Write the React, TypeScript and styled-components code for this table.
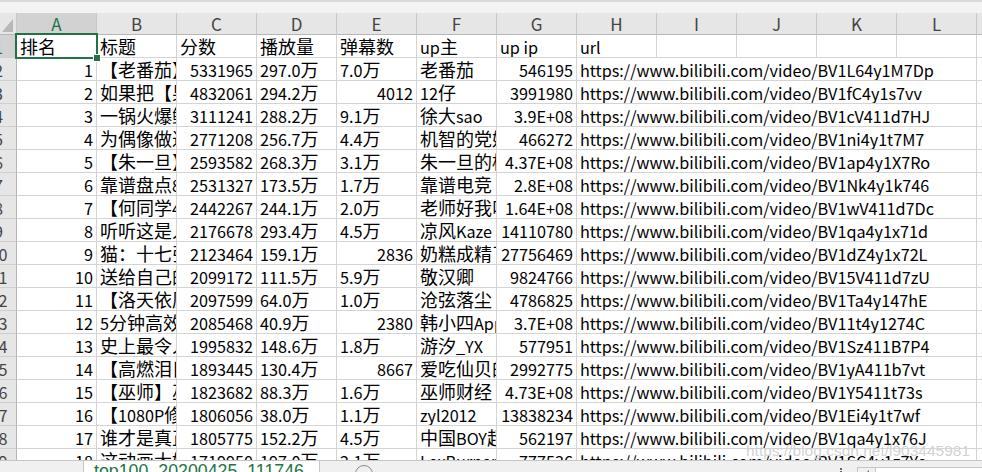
import React from "react";
import styled, { createGlobalStyle, css } from "styled-components";

const GREEN = "#217346";
const GRID = "#d4d4d4";
const HEAD_BG = "#e6e6e6";
const HEAD_SEL = "#d2d2d2";
const FONT = `"Noto Sans CJK SC", "Noto Sans", sans-serif`;
const COL_W = 80;

const Global = createGlobalStyle`
  html, body { margin: 0; padding: 0; background: #fff; overflow: hidden; }
  body { font-family: ${FONT}; }
`;

const Window = styled.div`
  position: relative;
  width: 982px;
  height: 472px;
  display: flex;
  flex-direction: column;
  overflow: hidden;
  background: #fff;
`;

const TopStrip = styled.div`
  flex: none;
  height: 13px;
  box-sizing: border-box;
  background: #f3f3f3;
  border-top: 2px solid #d9d9d9;
`;

const GridArea = styled.div`
  flex: 1;
  min-height: 0;
  overflow: hidden;
`;

const Sheet = styled.div`
  display: flex;
  flex-direction: column;
  width: max-content;
  margin-left: -19px;
`;

const Row = styled.div<{ $h: number }>`
  display: flex;
  flex: none;
  height: ${(p) => p.$h}px;
`;

const Corner = styled.div`
  flex: none;
  width: 36px;
  box-sizing: border-box;
  background: ${HEAD_BG};
  border-right: 1px solid #c8c8c8;
  border-bottom: 1px solid #b6b6b6;
  display: flex;
  justify-content: flex-end;
  align-items: flex-end;
  padding: 0 3px 2px 0;
`;

const CornerTriangle = styled.div`
  width: 0;
  height: 0;
  border-left: 11px solid transparent;
  border-bottom: 13px solid #b8b8b8;
`;

const ColHeader = styled.div<{ $sel?: boolean }>`
  flex: none;
  width: ${COL_W}px;
  box-sizing: border-box;
  background: ${(p) => (p.$sel ? HEAD_SEL : HEAD_BG)};
  color: ${(p) => (p.$sel ? GREEN : "#444")};
  border-right: 1px solid #c8c8c8;
  border-bottom: 1px solid #b6b6b6;
  font-size: 17px;
  line-height: 21px;
  text-align: center;
`;

const RowHeader = styled.div<{ $sel?: boolean }>`
  flex: none;
  width: 36px;
  box-sizing: border-box;
  background: ${(p) => (p.$sel ? HEAD_SEL : HEAD_BG)};
  color: ${(p) => (p.$sel ? GREEN : "#444")};
  border-right: 1px solid #b6b6b6;
  border-bottom: 1px solid #cfcfcf;
  font-size: 16.2px;
  line-height: 22px;
  padding-top: 1px;
  text-align: center;
  overflow: hidden;
`;

const Cell = styled.div<{ $span?: number; $align?: "left" | "right"; $sel?: boolean }>`
  flex: none;
  width: ${(p) => (p.$span ?? 1) * COL_W}px;
  box-sizing: border-box;
  border-right: 1px solid ${GRID};
  border-bottom: 1px solid ${GRID};
  padding: 1px 3px 0;
  font-size: 16.2px;
  line-height: 22px;
  color: #000;
  white-space: nowrap;
  overflow: hidden;
  text-align: ${(p) => p.$align ?? "left"};
  ${(p) =>
    p.$sel &&
    css`
      position: relative;
      overflow: visible;
      &::after {
        content: "";
        position: absolute;
        z-index: 2;
        left: -2px;
        top: -2px;
        right: -2px;
        bottom: -2px;
        border: 2px solid ${GREEN};
      }
    `}
`;

/* CJK glyphs are drawn a little larger than the Latin ones, as in the sheet's font */
const Wide = styled.span`
  font-size: 18px;
  line-height: 1;
`;

const FillHandle = styled.span`
  position: absolute;
  z-index: 3;
  right: -4px;
  bottom: -4px;
  width: 6px;
  height: 6px;
  background: ${GREEN};
  box-shadow: 0 0 0 1px #fff;
`;

const TabBar = styled.div`
  flex: none;
  height: 12px;
  box-sizing: border-box;
  background: #f0f0f0;
  border-top: 1px solid #c6c6c6;
  display: flex;
  align-items: flex-start;
  overflow: hidden;
`;

const TabNav = styled.div`
  flex: none;
  width: 83px;
`;

const ActiveTab = styled.div`
  flex: none;
  width: 237px;
  height: 13px;
  margin-top: -1px;
  box-sizing: border-box;
  background: #fff;
  border-left: 1px solid #c6c6c6;
  border-right: 1px solid #c6c6c6;
  padding: 1px 0 0 10px;
  font-family: "Liberation Sans", Arial, sans-serif;
  font-size: 17.8px;
  line-height: 20px;
  color: ${GREEN};
  white-space: nowrap;
  overflow: hidden;
`;

const AddSheet = styled.div`
  flex: none;
  width: 18px;
  height: 18px;
  margin: 4px 0 0 35px;
  box-sizing: border-box;
  border: 1.5px solid #8a8a8a;
  border-radius: 50%;
`;

const Spacer = styled.div`
  flex: 1;
`;

const Grip = styled.div`
  flex: none;
  width: 2px;
  height: 5px;
  margin: 7px 15px 0 0;
  border-left: 2px dotted #666;
  box-sizing: border-box;
`;

const ScrollButton = styled.div`
  flex: none;
  width: 18px;
  height: 6px;
  margin-top: 6px;
  box-sizing: border-box;
  border-left: 1px solid #c6c6c6;
  border-top: 1px solid #c6c6c6;
  display: flex;
  justify-content: center;
  padding-top: 2px;
`;

const ScrollArrow = styled.div`
  width: 0;
  height: 0;
  border-right: 5px solid #777;
  border-top: 5px solid transparent;
  border-bottom: 5px solid transparent;
`;

const ScrollTrack = styled.div`
  flex: none;
  width: 107px;
  height: 6px;
  margin-top: 6px;
  box-sizing: border-box;
  border-left: 1px solid #c6c6c6;
  border-top: 1px solid #c6c6c6;
  background: #fff;
`;

const Watermark = styled.div`
  position: absolute;
  left: 746px;
  top: 442px;
  font-family: "Liberation Sans", Arial, sans-serif;
  font-size: 15.5px;
  color: rgba(170, 170, 170, 0.55);
  text-shadow: 0 0 1px rgba(255, 255, 255, 0.9);
  white-space: nowrap;
  pointer-events: none;
`;

const CJK = /([\u3000-\u303f\u4e00-\u9fff\uff00-\uffef]+)/;

function Txt({ children }: { children: string }) {
  const parts = children.split(CJK).filter((p) => p !== "");
  return (
    <>
      {parts.map((p, i) => (CJK.test(p) ? <Wide key={i}>{p}</Wide> : <React.Fragment key={i}>{p}</React.Fragment>))}
    </>
  );
}

interface Entry {
  title: string;
  score: string;
  play: string;
  dm: string;
  up: string;
  ip: string;
  bv: string;
}

const DATA: Entry[] = [
  { title: "【老番茄】史上最骚的一集", score: "5331965", play: "297.0万", dm: "7.0万", up: "老番茄", ip: "546195", bv: "BV1L64y1M7Dp" },
  { title: "如果把【果宝特攻】做成游戏", score: "4832061", play: "294.2万", dm: "4012", up: "12仔", ip: "3991980", bv: "BV1fC4y1s7vv" },
  { title: "一锅火爆鲜辣的麻辣烫", score: "3111241", play: "288.2万", dm: "9.1万", up: "徐大sao", ip: "3.9E+08", bv: "BV1cV411d7HJ" },
  { title: "为偶像做过最疯狂的事", score: "2771208", play: "256.7万", dm: "4.4万", up: "机智的党妹", ip: "466272", bv: "BV1ni4y1t7M7" },
  { title: "【朱一旦】一块劳力士的回家之路", score: "2593582", play: "268.3万", dm: "3.1万", up: "朱一旦的枯燥生活", ip: "4.37E+08", bv: "BV1ap4y1X7Ro" },
  { title: "靠谱盘点8个游戏彩蛋", score: "2531327", play: "173.5万", dm: "1.7万", up: "靠谱电竞", ip: "2.8E+08", bv: "BV1Nk4y1k746" },
  { title: "【何同学4K】我拍了一张照片", score: "2442267", play: "244.1万", dm: "2.0万", up: "老师好我叫何同学", ip: "1.64E+08", bv: "BV1wV411d7Dc" },
  { title: "听听这是人话吗", score: "2176678", play: "293.4万", dm: "4.5万", up: "凉风Kaze", ip: "14110780", bv: "BV1qa4y1x71d" },
  { title: "猫：十七张牌你能秒我", score: "2123464", play: "159.1万", dm: "2836", up: "奶糕成精了", ip: "27756469", bv: "BV1dZ4y1x72L" },
  { title: "送给自己的生日礼物", score: "2099172", play: "111.5万", dm: "5.9万", up: "敬汉卿", ip: "9824766", bv: "BV15V411d7zU" },
  { title: "【洛天依原创】", score: "2097599", play: "64.0万", dm: "1.0万", up: "沧弦落尘", ip: "4786825", bv: "BV1Ta4y147hE" },
  { title: "5分钟高效学习法", score: "2085468", play: "40.9万", dm: "2380", up: "韩小四Apple", ip: "3.7E+08", bv: "BV11t4y1274C" },
  { title: "史上最令人感动的", score: "1995832", play: "148.6万", dm: "1.8万", up: "游汐_YX", ip: "577951", bv: "BV1Sz411B7P4" },
  { title: "【高燃泪目】致敬", score: "1893445", play: "130.4万", dm: "8667", up: "爱吃仙贝的丹丹", ip: "2992775", bv: "BV1yA411b7vt" },
  { title: "【巫师】巫师财经", score: "1823682", play: "88.3万", dm: "1.6万", up: "巫师财经", ip: "4.73E+08", bv: "BV1Y5411t73s" },
  { title: "【1080P修复】", score: "1806056", play: "38.0万", dm: "1.1万", up: "zyl2012", ip: "13838234", bv: "BV1Ei4y1t7wf" },
  { title: "谁才是真正的王者", score: "1805775", play: "152.2万", dm: "4.5万", up: "中国BOY超级大猩猩", ip: "562197", bv: "BV1qa4y1x76J" },
  { title: "这动画太好看了", score: "1719950", play: "197.0万", dm: "2.1万", up: "LexBurner", ip: "777536", bv: "BV1SC4y1z7Yc" },
];

const COLS = ["A", "B", "C", "D", "E", "F", "G", "H", "I", "J", "K", "L", "M"];
const HEAD = ["排名", "标题", "分数", "播放量", "弹幕数", "up主", "up ip", "url", "", "", "", "", ""];

const isNumber = (s: string) => /^[0-9.E+]+$/.test(s);

export default function App() {
  return (
    <>
      <Global />
      <Window>
        <TopStrip />
        <GridArea>
          <Sheet>
            <Row $h={22}>
              <Corner>
                <CornerTriangle />
              </Corner>
              {COLS.map((c, i) => (
                <ColHeader key={c} $sel={i === 0}>
                  {c}
                </ColHeader>
              ))}
            </Row>
            <Row $h={23}>
              <RowHeader $sel>1</RowHeader>
              {HEAD.map((h, i) =>
                i === 0 ? (
                  <Cell key={i} $sel>
                    <Txt>{h}</Txt>
                    <FillHandle />
                  </Cell>
                ) : (
                  <Cell key={i}>
                    <Txt>{h}</Txt>
                  </Cell>
                )
              )}
            </Row>
            {DATA.map((d, i) => (
              <Row $h={23} key={d.bv}>
                <RowHeader>{i + 2}</RowHeader>
                <Cell $align="right">{i + 1}</Cell>
                <Cell>
                  <Txt>{d.title}</Txt>
                </Cell>
                <Cell $align="right">{d.score}</Cell>
                <Cell>
                  <Txt>{d.play}</Txt>
                </Cell>
                <Cell $align={isNumber(d.dm) ? "right" : "left"}>
                  <Txt>{d.dm}</Txt>
                </Cell>
                <Cell>
                  <Txt>{d.up}</Txt>
                </Cell>
                <Cell $align="right">{d.ip}</Cell>
                <Cell $span={5}>https://www.bilibili.com/video/{d.bv}</Cell>
                <Cell />
              </Row>
            ))}
          </Sheet>
        </GridArea>
        <TabBar>
          <TabNav />
          <ActiveTab>top100_20200425_111746</ActiveTab>
          <AddSheet />
          <Spacer />
          <Grip />
          <ScrollButton>
            <ScrollArrow />
          </ScrollButton>
          <ScrollTrack />
        </TabBar>
        <Watermark>https://blog.csdn.net/l903445981</Watermark>
      </Window>
    </>
  );
}
